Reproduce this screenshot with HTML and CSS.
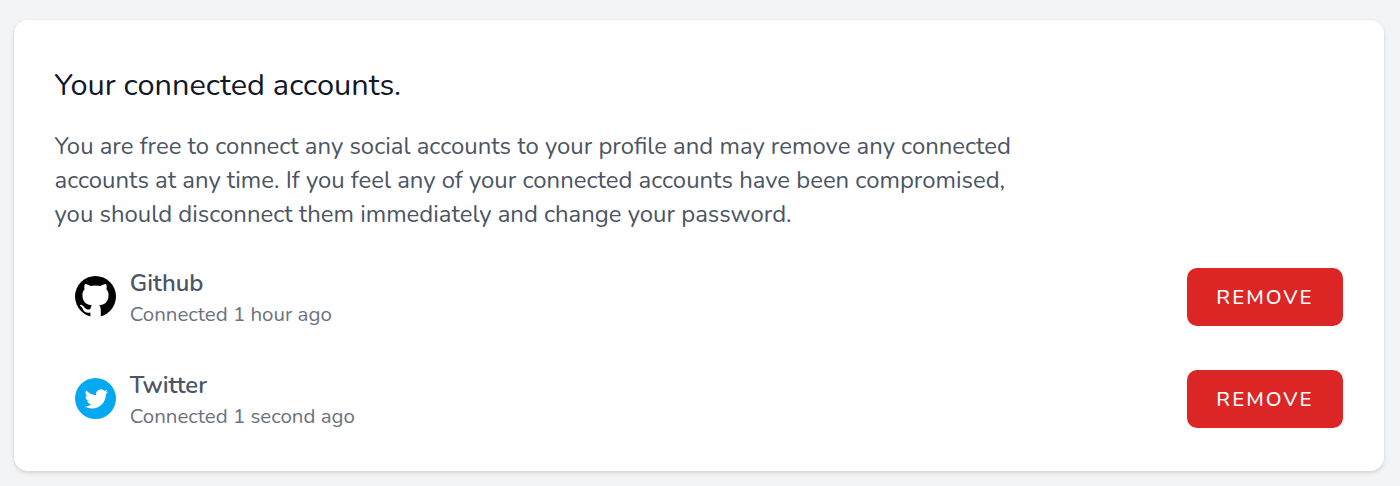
FILE: index.html
```html
<!DOCTYPE html>
<html lang="en">
<head>
<meta charset="utf-8">
<title>Connected accounts</title>
<link rel="stylesheet" href="styles.css">
</head>
<body>
<main class="card">
  <h1 class="title">Your connected accounts.</h1>
  <p class="intro">You are free to connect any social accounts to your profile and may remove any connected accounts at any time. If you feel any of your connected accounts have been compromised, you should disconnect them immediately and change your password.</p>
  <ul class="accounts">
    <li class="account">
      <svg class="logo" viewBox="0 0 41 41" aria-hidden="true"><circle cx="20.5" cy="20.5" r="20.5"/><path fill="#fff" d="M15.4 41.5V36.6C11.4 37.4 9.3 36.2 8.2 33.8C7.5 32 6.8 30.8 5.3 30C4.5 29.2 5.3 28.7 6.5 28.9C8.2 29.2 9 30.7 9.8 31.8C11.3 34 13.4 33.7 15.4 32.9C15.6 31.2 16 30.2 16.9 29.4C11.6 28.7 7.4 26.3 7.4 19C7.4 16.5 8.1 14.7 9.6 13.2C9.1 11.8 9.1 9.9 9.9 7.9C11.8 7.7 13.6 8.8 15.5 10.1C18.6 9.3 22.4 9.3 25.5 10.1C27.4 8.8 29.2 7.7 31.1 7.9C31.9 9.9 31.9 11.8 31.4 13.2C32.9 14.7 33.6 16.5 33.6 19C33.6 26.3 29.4 28.7 24.1 29.4C25.2 30.4 25.8 31.8 25.8 34V41.5Z"/></svg>
      <div class="details">
        <div class="name">Github</div>
        <div class="status">Connected 1 hour ago</div>
      </div>
      <button class="remove" type="button">Remove</button>
    </li>
    <li class="account">
      <svg class="logo" viewBox="0 0 41 41" aria-hidden="true"><circle cx="20.5" cy="20.5" r="20.5" fill="#03a9f0"/><path fill="#fff" transform="translate(9.6 9.1) scale(.985)" d="M23.953 4.57a10 10 0 01-2.825.775 4.958 4.958 0 002.163-2.723c-.951.555-2.005.959-3.127 1.184a4.92 4.92 0 00-8.384 4.482C7.69 8.095 4.067 6.13 1.64 3.162a4.822 4.822 0 00-.666 2.475c0 1.71.87 3.213 2.188 4.096a4.904 4.904 0 01-2.228-.616v.06a4.923 4.923 0 003.946 4.827 4.996 4.996 0 01-2.212.085 4.936 4.936 0 004.604 3.417 9.867 9.867 0 01-6.102 2.105c-.39 0-.779-.023-1.17-.067a13.995 13.995 0 007.557 2.209c9.053 0 13.998-7.496 13.998-13.985 0-.21 0-.42-.015-.63A9.935 9.935 0 0024 4.59z"/></svg>
      <div class="details">
        <div class="name">Twitter</div>
        <div class="status">Connected 1 second ago</div>
      </div>
      <button class="remove" type="button">Remove</button>
    </li>
  </ul>
</main>
</body>
</html>
```
FILE: styles.css
```css
* { box-sizing: border-box; }
body {
  margin: 0;
  padding: 20px 16px 16px 14px;
  height: 486px;
  background: #f3f4f6;
  font-family: Nunito, Lato, sans-serif;
  overflow: hidden;
}
.card {
  height: 451px;
  padding: 41px 41px 0 40.5px;
  background: #fff;
  border-radius: 14px;
  box-shadow: 0 2px 5px rgba(0, 0, 0, .1), 0 1px 3px rgba(0, 0, 0, .06);
}
.title {
  margin: 0;
  font-size: 30.72px;
  line-height: 48px;
  font-weight: 400;
  color: #111827;
}
.intro {
  width: 980px;
  margin: 20px 0 0;
  font-size: 23.9px;
  line-height: 34.13px;
  color: #4b5563;
}
.accounts { margin: 36.5px 0 0; padding: 0 0 0 20.5px; list-style: none; }
.account { display: flex; align-items: center; height: 58px; margin-bottom: 44.1px; }
.logo { width: 41px; height: 41px; margin-right: 13.7px; }
.details { flex: 1; padding-top: 2px; }
.name { font-size: 23.89px; line-height: 32px; font-weight: 600; color: #4b5563; }
.status { font-size: 20.48px; line-height: 30px; color: #6b7280; }
.remove {
  width: 156px;
  height: 58px;
  padding: 0;
  border: 0;
  border-radius: 10px;
  background: #dc2626;
  color: #fff;
  font: 500 20.48px/58px Nunito, Lato, sans-serif;
  letter-spacing: 2.05px;
  text-transform: uppercase;
}
```
